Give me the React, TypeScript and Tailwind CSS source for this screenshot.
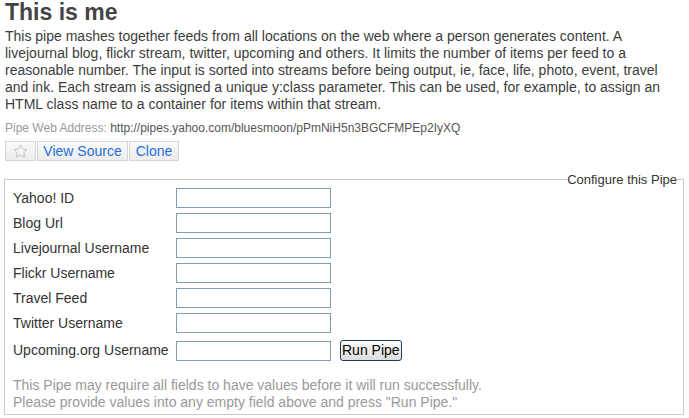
import { Star } from "lucide-react"

const fields = [
  "Yahoo! ID",
  "Blog Url",
  "Livejournal Username",
  "Flickr Username",
  "Travel Feed",
  "Twitter Username",
]

function Field({ label }: { label: string }) {
  return (
    <div className="flex h-[20px] items-center">
      <label className="w-[163px] text-[14px] leading-[17px] text-[#333]">{label}</label>
      <input type="text" className="h-[20px] w-[155px] border border-[#7f9db9] bg-white px-1 text-[13px] outline-none" />
    </div>
  )
}

export default function App() {
  return (
    <div className="min-h-[418px] bg-white px-[5px] font-['Liberation_Sans',Arial,sans-serif]">
      <h1 className="m-0 text-[23px] font-bold leading-[24px] text-[#444]">This is me</h1>
      <p className="mt-[4px] text-[14px] leading-[17px] text-[#3c3c3c]">
        This pipe mashes together feeds from all locations on the web where a person generates content. A livejournal
        blog, flickr stream, twitter, upcoming and others. It limits the number of items per feed to a reasonable
        number. The input is sorted into streams before being output, ie, face, life, photo, event, travel and ink.
        Each stream is assigned a unique y:class parameter. This can be used, for example, to assign an HTML class
        name to a container for items within that stream.
      </p>
      <div className="mt-[8px] text-[12px] leading-[15px]">
        <span className="text-[#999]">Pipe Web Address: </span>
        <span className="text-[#555]">http://pipes.yahoo.com/bluesmoon/pPmNiH5n3BGCFMPEp2IyXQ</span>
      </div>

      <div className="mt-[5px] flex h-[20px] text-[14px] leading-[18px]">
        <button className="flex h-[20px] w-[31px] items-center justify-center border border-[#d6d6d6] bg-gradient-to-b from-[#fafafa] to-[#ececec]">
          <Star size={15} strokeWidth={1.3} color="#b5b5b5" />
        </button>
        <button className="ml-px h-[20px] w-[91px] border border-[#d6d6d6] bg-gradient-to-b from-[#fafafa] to-[#ececec] text-[#1f6fd9]">
          View Source
        </button>
        <button className="ml-px h-[20px] w-[50px] border border-[#d6d6d6] bg-gradient-to-b from-[#fafafa] to-[#ececec] text-[#1f6fd9]">
          Clone
        </button>
      </div>

      <fieldset className="mt-[11px] -ml-px w-[680px] border border-[#c8c8c8] px-[8px] pb-[3px]">
        <legend className="ml-auto mr-[-2px] px-0 text-[13px] leading-[15px] text-[#333]">Configure this Pipe</legend>
        <div className="flex flex-col gap-[5px] pt-px">
          {fields.map((f) => (
            <Field key={f} label={f} />
          ))}
          <div className="mt-[2px] flex h-[21px] items-start">
            <label className="mt-[2px] w-[163px] text-[14px] leading-[17px] text-[#333]">Upcoming.org Username</label>
            <input type="text" className="mt-px h-[20px] w-[155px] border border-[#7f9db9] bg-white px-1 text-[13px] outline-none" />
            <button className="ml-[9px] h-[21px] rounded-[3px] border border-[#1d3b5c] bg-gradient-to-b from-[#fdfdfd] to-[#dcdcdc] px-[1px] text-[14px] leading-[17px] text-black">
              Run Pipe
            </button>
          </div>
        </div>
        <div className="mt-[16px] text-[14px] leading-[17px] text-[#999]">
          <div>This Pipe may require all fields to have values before it will run successfully.</div>
          <div>Please provide values into any empty field above and press "Run Pipe."</div>
        </div>
      </fieldset>
    </div>
  )
}
